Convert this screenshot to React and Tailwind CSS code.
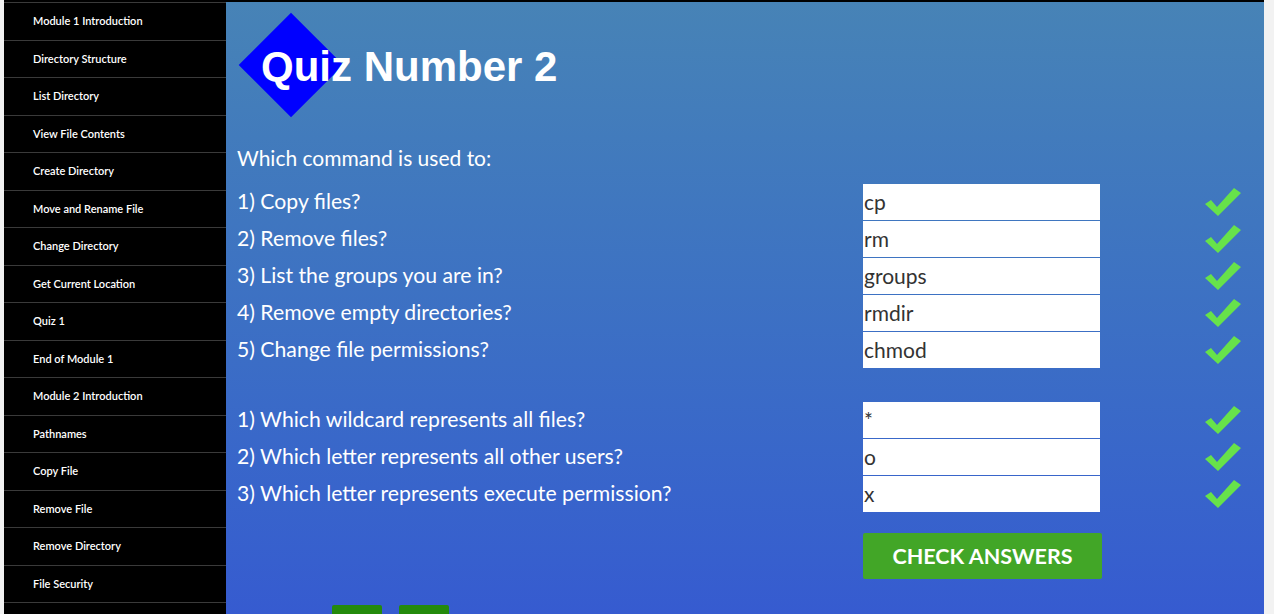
import React from "react";

const nav = [
  "Module 1 Introduction",
  "Directory Structure",
  "List Directory",
  "View File Contents",
  "Create Directory",
  "Move and Rename File",
  "Change Directory",
  "Get Current Location",
  "Quiz 1",
  "End of Module 1",
  "Module 2 Introduction",
  "Pathnames",
  "Copy File",
  "Remove File",
  "Remove Directory",
  "File Security",
];

const group1 = [
  ["1) Copy files?", "cp"],
  ["2) Remove files?", "rm"],
  ["3) List the groups you are in?", "groups"],
  ["4) Remove empty directories?", "rmdir"],
  ["5) Change file permissions?", "chmod"],
];

const group2 = [
  ["1) Which wildcard represents all files?", "*"],
  ["2) Which letter represents all other users?", "o"],
  ["3) Which letter represents execute permission?", "x"],
];

function Check() {
  return (
    <svg width="36" height="28" viewBox="0 0 36 28" className="block">
      <polygon points="0,16 6,12 12,19 29,0 36,5 13,28" fill="#67e24a" />
    </svg>
  );
}

function Row({ q, a }) {
  return (
    <div className="flex h-[37px] items-center">
      <div className="w-[626px] text-[21.2px] text-white">{q}</div>
      <div className="flex h-[36px] w-[237px] items-center bg-white pl-[1px] text-[21px] text-[#333]">
        {a}
      </div>
      <div className="ml-[105px]">
        <Check />
      </div>
    </div>
  );
}

export default function App() {
  return (
    <div
      className="flex h-[614px] w-[1274px] overflow-hidden bg-[#f2f2f2] pl-[4px] pr-[10px]"
      style={{ fontFamily: "Lato, 'Liberation Sans', sans-serif" }}
    >
      <div className="flex flex-1 border-t-2 border-black">
        <aside className="w-[222px] bg-black">
          <div className="border-t border-[#3a3a3a]">
            {nav.map((n) => (
              <div
                key={n}
                className="flex h-[37.5px] items-center border-b border-[#3a3a3a] pl-[29px] text-[11px] font-semibold text-white"
              >
                {n}
              </div>
            ))}
          </div>
        </aside>
        <main className="relative flex-1 bg-gradient-to-b from-[#4783b6] to-[#365bd0] pl-[11px]">
          <div className="relative h-[142px]">
            <div className="absolute left-[17px] top-[26px] h-[74px] w-[74px] rotate-45 bg-[#0000ff]" />
            <h1
              className="relative pl-[24px] pt-[44px] text-[42px] font-bold leading-[42px] text-white"
              style={{ fontFamily: "'Liberation Sans', Arial, sans-serif" }}
            >
              Quiz Number 2
            </h1>
          </div>
          <p className="text-[21px] leading-[28px] text-white">Which command is used to:</p>
          <div className="mt-[11px]">
            {group1.map(([q, a]) => (
              <Row key={q} q={q} a={a} />
            ))}
          </div>
          <div className="mt-[33px]">
            {group2.map(([q, a]) => (
              <Row key={q} q={q} a={a} />
            ))}
          </div>
          <div className="mt-[21px] pl-[626px]">
            <button className="flex h-[46px] w-[239px] items-center justify-center rounded-[2px] bg-[#42a627] text-[21.5px] font-bold text-white">
              CHECK ANSWERS
            </button>
          </div>
          <div className="mt-[26px] flex gap-[17px] pl-[95px]">
            <div className="h-[40px] w-[50px] rounded-[2px] bg-[#248a0c]" />
            <div className="h-[40px] w-[50px] rounded-[2px] bg-[#248a0c]" />
          </div>
        </main>
      </div>
    </div>
  );
}
